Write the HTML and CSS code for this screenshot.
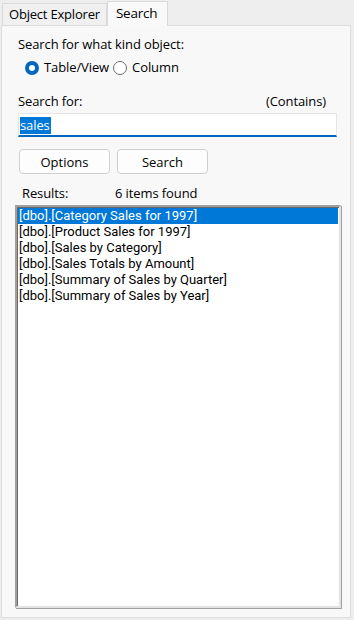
FILE: index.html
```html
<!DOCTYPE html>
<html lang="en">
<head>
    <meta charset="UTF-8">
    <title>Search</title>
    <link rel="stylesheet" href="styles.css">
</head>
<body>

    <div class="tabs">
        <div class="tab">Object Explorer</div>
        <div class="tab active">Search</div>
    </div>

    <div class="panel">
        <div class="label">Search for what kind object:</div>
        <div class="radios">
            <label class="radio"><span class="dot checked"></span>Table/View</label>
            <label class="radio"><span class="dot"></span>Column</label>
        </div>

        <div class="label-row">
            <span>Search for:</span>
            <span>(Contains)</span>
        </div>
        <div class="input"><span class="sel">sales</span></div>

        <div class="buttons">
            <button class="btn">Options</button>
            <button class="btn">Search</button>
        </div>

        <div class="results-row">
            <span class="results-label">Results:</span>
            <span>6 items found</span>
        </div>

        <div class="list">
            <div class="item selected">[dbo].[Category Sales for 1997]</div>
            <div class="item">[dbo].[Product Sales for 1997]</div>
            <div class="item">[dbo].[Sales by Category]</div>
            <div class="item">[dbo].[Sales Totals by Amount]</div>
            <div class="item">[dbo].[Summary of Sales by Quarter]</div>
            <div class="item">[dbo].[Summary of Sales by Year]</div>
        </div>
    </div>

</body>
</html>
```

FILE: styles.css
```css
body {
    margin: 0;
    width: 354px;
    height: 620px;
    background: #eeeeee;
    font-family: "Open Sans", "Noto Sans", sans-serif;
    font-size: 13px;
    color: #000;
    display: flex;
    flex-direction: column;
}

.tabs {
    display: flex;
    align-items: flex-end;
    padding: 2px 0 0 2px;
    height: 25px;
    box-sizing: border-box;
}

.tab {
    height: 22px;
    line-height: 20px;
    padding: 0 6px;
    border: 1px solid #dadada;
    border-bottom: none;
    box-sizing: border-box;
    background: #f0f0f0;
    letter-spacing: -0.2px;
}

.tab.active {
    height: 25px;
    line-height: 23px;
    padding: 0 10px 0 8px;
    background: #f9f9f9;
    margin-bottom: -1px;
    position: relative;
    z-index: 1;
    font-size: 13.5px;
}

.panel {
    margin: 0 3px 2px 1px;
    flex: 1;
    background: #f8f8f8;
    border: 1px solid #dddddd;
    padding: 10px 12px 9px 12px;
    display: flex;
    flex-direction: column;
    letter-spacing: -0.1px;
}

.label {
    padding-left: 4px;
    line-height: 17px;
}

.radios {
    display: flex;
    gap: 4px;
    margin-top: 6px;
    padding-left: 11px;
    line-height: 17px;
}

.radio {
    display: flex;
    align-items: center;
    gap: 5px;
}

.dot {
    width: 12px;
    height: 12px;
    border: 1px solid #6e6e6e;
    border-radius: 50%;
    background: #fff;
}

.dot.checked {
    width: 6px;
    height: 6px;
    border: 4px solid #0067c0;
    background: #fff;
}

.label-row {
    display: flex;
    justify-content: space-between;
    margin-top: 17px;
    padding: 0 12px 0 4px;
    line-height: 17px;
}

.input {
    margin-top: 3px;
    margin-right: 1px;
    margin-left: 4px;
    height: 24px;
    background: #fff;
    border: 1px solid #e5e5e5;
    border-bottom: 2px solid #0067c0;
    box-sizing: border-box;
    padding: 2px 1px;
}

.sel {
    background: #0078d7;
    color: #fff;
    display: inline-block;
    line-height: 17px;
    padding-right: 1px;
}

.buttons {
    display: flex;
    gap: 7px;
    margin-top: 12px;
    padding-left: 5px;
}

.btn {
    width: 91px;
    height: 25px;
    font: inherit;
    background: #fdfdfd;
    border: 1px solid #d0d0d0;
    border-radius: 4px;
    color: #000;
}

.results-row {
    display: flex;
    margin-top: 11px;
    padding-left: 8px;
    line-height: 17px;
}

.results-label {
    width: 93px;
}

.list {
    margin-top: 3px;
    flex: 1;
    background: #fff;
    border: 2px solid #a0a0a0;
    border-color: #a0a0a0 #e3e3e3 #e3e3e3 #a0a0a0;
    box-shadow: inset 1px 1px 0 #696969, 1px 1px 0 #a0a0a0;
    padding: 1px;
    margin-left: 1px;
    margin-right: -3px;
    font-family: Roboto, "Liberation Sans", sans-serif;
    letter-spacing: 0;
}

.item {
    height: 16px;
    line-height: 16px;
    padding-left: 1px;
    white-space: nowrap;
}

.item.selected {
    background: #0078d7;
    color: #fff;
}
```
